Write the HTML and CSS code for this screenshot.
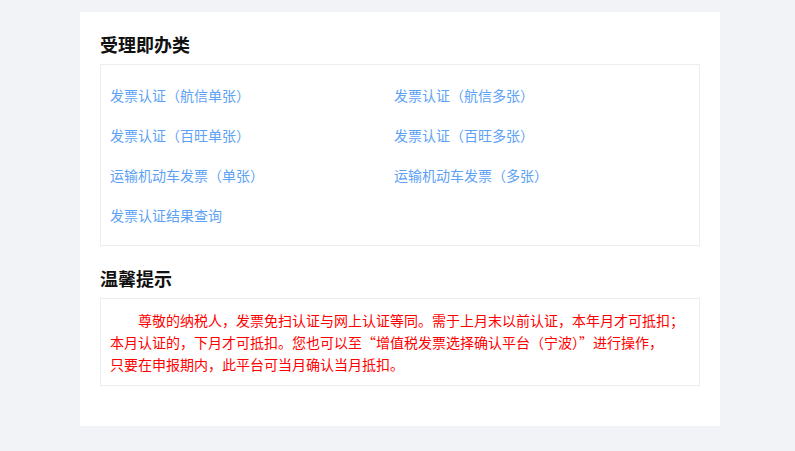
FILE: index.html
```html
<!DOCTYPE html>
<html lang="zh-CN">
<head>
<meta charset="utf-8">
<link rel="stylesheet" href="styles.css">
</head>
<body>
<div class="card">
  <h3 class="title">受理即办类</h3>
  <div class="box links">
    <a class="link">发票认证（航信单张）</a>
    <a class="link">发票认证（航信多张）</a>
    <a class="link">发票认证（百旺单张）</a>
    <a class="link">发票认证（百旺多张）</a>
    <a class="link">运输机动车发票（单张）</a>
    <a class="link">运输机动车发票（多张）</a>
    <a class="link">发票认证结果查询</a>
  </div>
  <h3 class="title second">温馨提示</h3>
  <div class="box tip">
    <p class="tip-text">尊敬的纳税人，发票免扫认证与网上认证等同。需于上月末以前认证，本年月才可抵扣；<br>本月认证的，下月才可抵扣。您也可以至“增值税发票选择确认平台（宁波）”进行操作，<br>只要在申报期内，此平台可当月确认当月抵扣。</p>
  </div>
</div>
</body>
</html>
```
FILE: styles.css
```css
html, body {
  margin: 0;
  padding: 0;
  background: #f2f3f7;
}
body {
  font-family: "Noto Sans CJK SC", "Noto Sans", sans-serif;
  padding-top: 12px;
  height: 451px;
  box-sizing: border-box;
}
.card {
  width: 640px;
  margin-left: 80px;
  background: #fff;
  box-sizing: border-box;
  padding: 20px 20px 40px 20px;
}
.title {
  margin: 0 0 8px 0;
  font-size: 18px;
  line-height: 24px;
  font-weight: bold;
  color: #111;
}
.title.second {
  margin-top: 20px;
}
.box {
  border: 1px solid #ebedf0;
}
.links {
  display: grid;
  grid-template-columns: 284px 1fr;
  padding: 10px 9px;
}
.link {
  display: block;
  font-size: 14px;
  line-height: 40px;
  color: #5ea2f5;
  cursor: pointer;
}
.tip {
  padding: 10px 9px;
}
.tip-text {
  margin: 0;
  font-size: 14px;
  line-height: 22px;
  color: #ff0000;
  text-indent: 2em;
  white-space: nowrap;
}
```
